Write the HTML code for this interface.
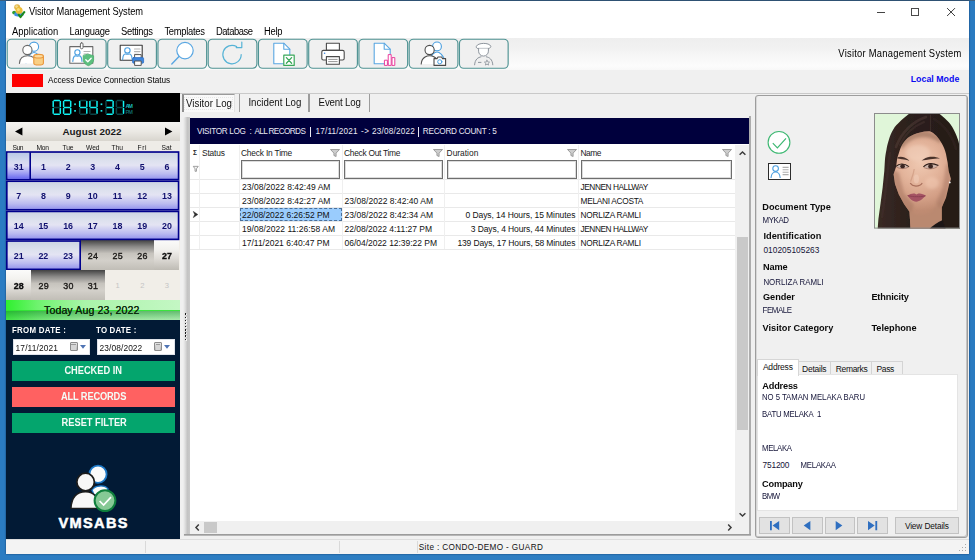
<!DOCTYPE html>
<html>
<head>
<meta charset="utf-8">
<title>Visitor Management System</title>
<style>
*{box-sizing:border-box;margin:0;padding:0}
html,body{width:975px;height:560px;overflow:hidden}
body{position:relative;background:linear-gradient(90deg,#2b7cc2 0%,#2e7ec2 50%,#2a7ac0 100%);font-family:"Liberation Sans",sans-serif;font-size:9px;color:#000}
.abs{position:absolute}
.t{position:absolute;white-space:pre;line-height:1;font-family:"Liberation Sans",sans-serif}
svg{overflow:visible}
</style>
</head>
<body>
<div style="position:absolute;left:0px;top:0px;width:975.00px;height:1.20px;background:#3a5f80;"></div>
<div style="position:absolute;left:6px;top:1px;width:963.00px;height:552.80px;background:#f0f0f0;box-shadow:0 0 1.6px rgba(10,30,70,.75);"></div>
<div style="position:absolute;left:6px;top:1px;width:963.00px;height:37.00px;background:#fff;"></div>
<svg class="abs" style="left:8px;top:2px" width="22" height="18" viewBox="8 2 22 18">
<ellipse cx="14.2" cy="12.6" rx="2" ry="1.9" fill="#2f9e2f"/>
<path d="M14.4 13 C15.6 11.6,22.4 11.6,23.7 13.2 L23.7 15.2 C21 16.8,16.4 16.8,14.4 15.4z" fill="#3d8ee6"/>
<circle cx="17.2" cy="7.2" r="3" fill="#e3b84a"/><circle cx="16.6" cy="6.6" r="1.3" fill="#f4dc90"/>
<circle cx="19.1" cy="10.4" r="3.5" fill="#edbd38"/><circle cx="18.4" cy="9.4" r="1.5" fill="#f9de7c"/>
<path d="M18.2 14.2 L20.5 17.2 L24.8 11.4" fill="none" stroke="#1c8a1c" stroke-width="2" stroke-linejoin="round"/>
</svg>
<div class="t" style="left:29.00px;top:8.33px;font-size:9.3px;letter-spacing:-0.088px;color:#000;transform:scaleY(1.17);transform-origin:0 7.87px;">Visitor Management System</div>
<div style="position:absolute;left:877px;top:12px;width:8.00px;height:1.00px;background:#444;"></div>
<div style="position:absolute;left:911px;top:8px;width:8.00px;height:8.00px;border:1px solid #4a4a4a;"></div>
<svg class="abs" style="left:946px;top:7px" width="11" height="11" viewBox="0 0 11 11"><path d="M1.1 1.1 L9 9 M9 1.1 L1.1 9" stroke="#333" stroke-width=".95" fill="none"/></svg>
<div class="t" style="left:12.00px;top:27.04px;font-size:9.4px;letter-spacing:0.042px;color:#000;transform:scaleY(1.13);transform-origin:0 7.96px;">Application</div>
<div class="t" style="left:69.60px;top:27.04px;font-size:9.4px;letter-spacing:-0.203px;color:#000;transform:scaleY(1.13);transform-origin:0 7.96px;">Language</div>
<div class="t" style="left:121.00px;top:27.04px;font-size:9.4px;letter-spacing:-0.280px;color:#000;transform:scaleY(1.13);transform-origin:0 7.96px;">Settings</div>
<div class="t" style="left:164.40px;top:27.04px;font-size:9.4px;letter-spacing:-0.280px;color:#000;transform:scaleY(1.13);transform-origin:0 7.96px;">Templates</div>
<div class="t" style="left:216.00px;top:27.04px;font-size:9.4px;letter-spacing:-0.462px;color:#000;transform:scaleY(1.13);transform-origin:0 7.96px;">Database</div>
<div class="t" style="left:264.00px;top:27.04px;font-size:9.4px;letter-spacing:-0.244px;color:#000;transform:scaleY(1.13);transform-origin:0 7.96px;">Help</div>
<div style="position:absolute;left:6px;top:38px;width:963.00px;height:32.00px;background:linear-gradient(#eeeeee 0%,#f1f1f1 30%,#f7f7f7 60%,#fcfcfc 88%,#f8f8f8 100%);"></div>
<svg class="abs" style="left:0;top:0" width="520" height="72" viewBox="0 0 520 72" fill="none" stroke-linecap="round" stroke-linejoin="round">
<rect x="7.20" y="39.2" width="48.7" height="29" rx="4.2" fill="#f0f0f0" stroke="#4f9393" stroke-width="1.15"/><rect x="57.45" y="39.2" width="48.7" height="29" rx="4.2" fill="#f0f0f0" stroke="#4f9393" stroke-width="1.15"/><rect x="107.70" y="39.2" width="48.7" height="29" rx="4.2" fill="#f0f0f0" stroke="#4f9393" stroke-width="1.15"/><rect x="157.95" y="39.2" width="48.7" height="29" rx="4.2" fill="#f0f0f0" stroke="#4f9393" stroke-width="1.15"/><rect x="208.20" y="39.2" width="48.7" height="29" rx="4.2" fill="#f0f0f0" stroke="#4f9393" stroke-width="1.15"/><rect x="258.45" y="39.2" width="48.7" height="29" rx="4.2" fill="#f0f0f0" stroke="#4f9393" stroke-width="1.15"/><rect x="308.70" y="39.2" width="48.7" height="29" rx="4.2" fill="#f0f0f0" stroke="#4f9393" stroke-width="1.15"/><rect x="358.95" y="39.2" width="48.7" height="29" rx="4.2" fill="#f0f0f0" stroke="#4f9393" stroke-width="1.15"/><rect x="409.20" y="39.2" width="48.7" height="29" rx="4.2" fill="#f0f0f0" stroke="#4f9393" stroke-width="1.15"/><rect x="459.45" y="39.2" width="48.7" height="29" rx="4.2" fill="#f0f0f0" stroke="#4f9393" stroke-width="1.15"/><path d="M26 63 C26.5 55.5,32.5 52.50000000000001,34.0 52.50000000000001 C35.5 52.50000000000001,41.5 55.5,42 63" fill="#fff" stroke="#4a9fe0" stroke-width="1.1"/><circle cx="34" cy="46.7" r="4.6" fill="#fff" stroke="#4a9fe0" stroke-width="1.1"/><path d="M19.4 63.4 C19.9 55.9,26.2 55.800000000000004,27.7 55.800000000000004 C29.2 55.800000000000004,35.5 55.9,36 63.4" fill="#fff" stroke="#6a6a6a" stroke-width="1.1"/><circle cx="27.4" cy="50" r="4.6" fill="#fff" stroke="#6a6a6a" stroke-width="1.1"/><path d="M33.8 56.2 v7 a4.8 1.8 0 0 0 9.6 0 v-7" fill="#f9cf84" stroke="#e9963a" stroke-width="1.1"/><ellipse cx="38.6" cy="56.2" rx="4.8" ry="1.8" fill="#fbdca0" stroke="#e9963a" stroke-width="1.1"/><rect x="69.8" y="46.6" width="23" height="16.6" fill="#fff" stroke="#6a6a6a" stroke-width="1.1"/><rect x="80.4" y="42.8" width="2.6" height="6" rx="1.2" fill="#fff" stroke="#6a6a6a" stroke-width="1"/><path d="M72.8 61.4 C73.3 53.9,75.9 56.2,77.4 56.2 C78.9 56.2,81.5 53.9,82 61.4" fill="none" stroke="#4a9fe0" stroke-width="1.1"/><circle cx="77.4" cy="52.4" r="2.6" fill="none" stroke="#4a9fe0" stroke-width="1.1"/><path d="M84 51.5h6M84 54h4" stroke="#b5b5b5" stroke-width="1.2"/><path d="M88.4 54.2 l5.2 1.6 v4 c0 3 -2.4 4.8 -5.2 5.9 c-2.8 -1.1 -5.2 -2.9 -5.2 -5.9 v-4z" fill="#5cbf7f" stroke="#4aae6c" stroke-width="0.8"/><path d="M85.8 59.8 l2 2 l3.4 -3.6" stroke="#fff" stroke-width="1.3"/><rect x="120.2" y="45.2" width="22" height="15" fill="#fff" stroke="#3a3a3a" stroke-width="1.1"/><path d="M122.6 59.6 C123.1 52.1,125.89999999999999 54.300000000000004,127.39999999999999 54.300000000000004 C128.89999999999998 54.300000000000004,131.7 52.1,132.2 59.6" fill="none" stroke="#4a9fe0" stroke-width="1.1"/><circle cx="127.4" cy="50.4" r="2.7" fill="none" stroke="#4a9fe0" stroke-width="1.1"/><path d="M134.5 49h5.5M134.5 51.6h5.5M134.5 54.2h4" stroke="#b5b5b5" stroke-width="1.1"/><rect x="135" y="54.6" width="6.2" height="4" fill="#fff" stroke="#555" stroke-width="1"/><rect x="132.6" y="57.6" width="11" height="5.6" rx="1" fill="#3f86dd" stroke="#2f6fc4" stroke-width="0.8"/><rect x="135" y="61" width="6.2" height="4.4" fill="#fff" stroke="#555" stroke-width="1"/><circle cx="185" cy="50.6" r="8.2" fill="#fff" stroke="#5aa7e2" stroke-width="1.2"/><path d="M179 56.6 L171.8 64" stroke="#5aa7e2" stroke-width="1.4"/><path d="M241.2 54.6 a9.2 9.2 0 1 1 -4.6 -8" stroke="#56b3d6" stroke-width="1.2"/><path d="M236.2 47.6 h5.6 v-5.6" stroke="#56b3d6" stroke-width="1.2"/><path d="M273.8 43.2 h10 l6 6 v14.6 h-16z" fill="#fff" stroke="#5aa7e2" stroke-width="1.1"/><path d="M283.8 43.2 v6 h6" stroke="#5aa7e2" stroke-width="1.1"/><rect x="283.8" y="55.2" width="10.4" height="10.2" fill="#fff" stroke="#3aa85a" stroke-width="1.2"/><path d="M286.4 57.6 l5.2 5.6 M291.6 57.6 l-5.2 5.6" stroke="#3aa85a" stroke-width="1.3"/><rect x="326.4" y="43.2" width="13" height="7.2" fill="#fff" stroke="#4a4a4a" stroke-width="1.1"/><rect x="321.8" y="50.4" width="22.4" height="9.6" rx="1.6" fill="#fff" stroke="#4a4a4a" stroke-width="1.1"/><rect x="326.4" y="56.6" width="13" height="7.6" fill="#fff" stroke="#4a4a4a" stroke-width="1.1"/><path d="M328.6 59.4h8.6M328.6 61.6h8.6" stroke="#8a8a8a" stroke-width="0.9"/><circle cx="324.6" cy="53.2" r="0.8" fill="#3f86dd"/><path d="M374.2 43.2 h10 l6 6 v14.6 h-16z" fill="#fff" stroke="#5aa7e2" stroke-width="1.1"/><path d="M384.2 43.2 v6 h6" stroke="#5aa7e2" stroke-width="1.1"/><rect x="384.8" y="60.2" width="2.6" height="5.2" fill="#fff" stroke="#ea3f9d" stroke-width="1"/><rect x="388.6" y="54.6" width="2.6" height="10.8" fill="#fff" stroke="#ea3f9d" stroke-width="1"/><rect x="392.4" y="57.6" width="2.4" height="7.8" fill="#fff" stroke="#ea3f9d" stroke-width="1"/><path d="M429.4 62 C429.9 54.5,435.5 52.0,437.0 52.0 C438.5 52.0,444.1 54.5,444.6 62" fill="#fff" stroke="#4a9fe0" stroke-width="1.1"/><circle cx="437" cy="46.4" r="4.4" fill="#fff" stroke="#4a9fe0" stroke-width="1.1"/><path d="M421.2 64 C421.7 56.5,428.2 55.800000000000004,429.7 55.800000000000004 C431.2 55.800000000000004,437.7 56.5,438.2 64" fill="#fff" stroke="#4d4d4d" stroke-width="1.1"/><circle cx="429.6" cy="50" r="4.6" fill="#fff" stroke="#4d4d4d" stroke-width="1.1"/><path d="M434 58.6 h3 l1 -1.6 h3.6 l1 1.6 h3 v6.8 h-11.6z" fill="#fff" stroke="#4a4a4a" stroke-width="1.1"/><circle cx="439.8" cy="61.8" r="2.1" stroke="#4a9fe0" stroke-width="1"/><path d="M476.2 46.8 c0 -4.6 14.6 -4.6 14.6 0 l-1.4 1.6 h-11.8z" fill="#fff" stroke="#8d949c" stroke-width="1"/><path d="M478.6 48.6 v2.6 a4.9 4.9 0 0 0 9.8 0 v-2.6" fill="#fff" stroke="#8d949c" stroke-width="1"/><path d="M474.6 64.8 c0.4 -5.6 3.4 -7.4 6.4 -8 M492.8 64.8 c-0.4 -5.6 -3.4 -7.4 -6.4 -8" stroke="#8d949c" stroke-width="1"/><path d="M478.4 62.4h2.6" stroke="#8d949c" stroke-width="1"/><path d="M487 60.2 l0.8 1.7 l1.8 .2 l-1.4 1.2 l.4 1.8 l-1.6 -.9 l-1.6 .9 l.4 -1.8 l-1.4 -1.2 l1.8 -.2z" stroke="#8d949c" stroke-width="0.8"/></svg>
<div class="t" style="left:838.30px;top:48.74px;font-size:9.4px;letter-spacing:0.251px;color:#000;transform:scaleY(1.1);transform-origin:0 7.96px;">Visitor Management System</div>
<div style="position:absolute;left:12.4px;top:74px;width:30.40px;height:13.20px;background:#fe0000;"></div>
<div class="t" style="left:48.00px;top:76.66px;font-size:8.2px;letter-spacing:-0.022px;color:#000;transform:scaleY(1.09);transform-origin:0 6.94px;">Access Device Connection Status</div>
<div class="t" style="left:910.70px;top:75.15px;font-size:8.8px;letter-spacing:0.022px;color:#0a0af0;font-weight:bold;">Local Mode</div>
<div style="position:absolute;left:6px;top:93.4px;width:174.00px;height:446.00px;background:#021a35;"></div>
<div style="position:absolute;left:6px;top:93.4px;width:174.00px;height:28.60px;background:#000;"></div>
<svg class="abs" style="left:0;top:90px" width="190" height="35" viewBox="0 90 190 35" fill="none"><path d="M54.20 100.50 L59.30 100.50" stroke="#10f2f2" stroke-width="1.5" stroke-linecap="round"/><path d="M60.30 101.50 L60.30 106.40" stroke="#10f2f2" stroke-width="1.5" stroke-linecap="round"/><path d="M60.30 108.40 L60.30 113.30" stroke="#10f2f2" stroke-width="1.5" stroke-linecap="round"/><path d="M54.20 114.30 L59.30 114.30" stroke="#10f2f2" stroke-width="1.5" stroke-linecap="round"/><path d="M53.20 108.40 L53.20 113.30" stroke="#10f2f2" stroke-width="1.5" stroke-linecap="round"/><path d="M53.20 101.50 L53.20 106.40" stroke="#10f2f2" stroke-width="1.5" stroke-linecap="round"/><path d="M54.20 107.40 L59.30 107.40" stroke="#0a4446" stroke-width="1.5" stroke-linecap="round"/><path d="M64.60 100.50 L69.70 100.50" stroke="#10f2f2" stroke-width="1.5" stroke-linecap="round"/><path d="M70.70 101.50 L70.70 106.40" stroke="#10f2f2" stroke-width="1.5" stroke-linecap="round"/><path d="M70.70 108.40 L70.70 113.30" stroke="#10f2f2" stroke-width="1.5" stroke-linecap="round"/><path d="M64.60 114.30 L69.70 114.30" stroke="#10f2f2" stroke-width="1.5" stroke-linecap="round"/><path d="M63.60 108.40 L63.60 113.30" stroke="#10f2f2" stroke-width="1.5" stroke-linecap="round"/><path d="M63.60 101.50 L63.60 106.40" stroke="#10f2f2" stroke-width="1.5" stroke-linecap="round"/><path d="M64.60 107.40 L69.70 107.40" stroke="#10f2f2" stroke-width="1.5" stroke-linecap="round"/><path d="M80.70 100.50 L85.80 100.50" stroke="#0a4446" stroke-width="1.5" stroke-linecap="round"/><path d="M86.80 101.50 L86.80 106.40" stroke="#10f2f2" stroke-width="1.5" stroke-linecap="round"/><path d="M86.80 108.40 L86.80 113.30" stroke="#10f2f2" stroke-width="1.5" stroke-linecap="round"/><path d="M80.70 114.30 L85.80 114.30" stroke="#0a4446" stroke-width="1.5" stroke-linecap="round"/><path d="M79.70 108.40 L79.70 113.30" stroke="#0a4446" stroke-width="1.5" stroke-linecap="round"/><path d="M79.70 101.50 L79.70 106.40" stroke="#10f2f2" stroke-width="1.5" stroke-linecap="round"/><path d="M80.70 107.40 L85.80 107.40" stroke="#10f2f2" stroke-width="1.5" stroke-linecap="round"/><path d="M90.90 100.50 L96.00 100.50" stroke="#0a4446" stroke-width="1.5" stroke-linecap="round"/><path d="M97.00 101.50 L97.00 106.40" stroke="#10f2f2" stroke-width="1.5" stroke-linecap="round"/><path d="M97.00 108.40 L97.00 113.30" stroke="#10f2f2" stroke-width="1.5" stroke-linecap="round"/><path d="M90.90 114.30 L96.00 114.30" stroke="#0a4446" stroke-width="1.5" stroke-linecap="round"/><path d="M89.90 108.40 L89.90 113.30" stroke="#0a4446" stroke-width="1.5" stroke-linecap="round"/><path d="M89.90 101.50 L89.90 106.40" stroke="#10f2f2" stroke-width="1.5" stroke-linecap="round"/><path d="M90.90 107.40 L96.00 107.40" stroke="#10f2f2" stroke-width="1.5" stroke-linecap="round"/><path d="M107.00 100.50 L112.10 100.50" stroke="#10f2f2" stroke-width="1.5" stroke-linecap="round"/><path d="M113.10 101.50 L113.10 106.40" stroke="#10f2f2" stroke-width="1.5" stroke-linecap="round"/><path d="M113.10 108.40 L113.10 113.30" stroke="#10f2f2" stroke-width="1.5" stroke-linecap="round"/><path d="M107.00 114.30 L112.10 114.30" stroke="#10f2f2" stroke-width="1.5" stroke-linecap="round"/><path d="M106.00 108.40 L106.00 113.30" stroke="#0a4446" stroke-width="1.5" stroke-linecap="round"/><path d="M106.00 101.50 L106.00 106.40" stroke="#0a4446" stroke-width="1.5" stroke-linecap="round"/><path d="M107.00 107.40 L112.10 107.40" stroke="#10f2f2" stroke-width="1.5" stroke-linecap="round"/><path d="M117.40 100.50 L122.50 100.50" stroke="#0a4446" stroke-width="1.5" stroke-linecap="round"/><path d="M123.50 101.50 L123.50 106.40" stroke="#10f2f2" stroke-width="1.5" stroke-linecap="round"/><path d="M123.50 108.40 L123.50 113.30" stroke="#10f2f2" stroke-width="1.5" stroke-linecap="round"/><path d="M117.40 114.30 L122.50 114.30" stroke="#0a4446" stroke-width="1.5" stroke-linecap="round"/><path d="M116.40 108.40 L116.40 113.30" stroke="#0a4446" stroke-width="1.5" stroke-linecap="round"/><path d="M116.40 101.50 L116.40 106.40" stroke="#0a4446" stroke-width="1.5" stroke-linecap="round"/><path d="M117.40 107.40 L122.50 107.40" stroke="#0a4446" stroke-width="1.5" stroke-linecap="round"/><rect x="74.2" y="103.4" width="1.7" height="1.7" fill="#1fe6e6"/><rect x="74.2" y="110" width="1.7" height="1.7" fill="#1fe6e6"/><rect x="100.60000000000001" y="103.4" width="1.7" height="1.7" fill="#1fe6e6"/><rect x="100.60000000000001" y="110" width="1.7" height="1.7" fill="#1fe6e6"/></svg>
<div class="t" style="left:125.40px;top:103.76px;font-size:5.6px;letter-spacing:-1.109px;color:#19b8b8;font-weight:bold;">AM</div>
<div class="t" style="left:125.40px;top:109.86px;font-size:5.6px;letter-spacing:-0.800px;color:#0f6466;font-weight:bold;">PM</div>
<div style="position:absolute;left:6px;top:122px;width:174.00px;height:18.60px;background:linear-gradient(#f5f4f1 0%,#ebe9e4 50%,#d8d5ce 100%);"></div>
<svg class="abs" style="left:0;top:120px" width="185" height="24" viewBox="0 120 185 24"><path d="M15 131.6 L22.4 127.6 V135.6z M172.4 131.6 L165 127.6 V135.6z" fill="#000"/></svg>
<div class="t" style="left:62.40px;top:127.22px;font-size:9.9px;letter-spacing:0.034px;color:#1a1a1a;font-weight:bold;">August 2022</div>
<div style="position:absolute;left:6px;top:140.6px;width:174.00px;height:11.40px;background:#eeece7;"></div>
<div class="t" style="left:12.40px;top:144.53px;font-size:6.7px;letter-spacing:-0.360px;color:#111;transform:scaleY(1.08);transform-origin:0 5.67px;">Sun</div>
<div class="t" style="left:36.40px;top:144.53px;font-size:6.7px;letter-spacing:-0.216px;color:#111;transform:scaleY(1.08);transform-origin:0 5.67px;">Mon</div>
<div class="t" style="left:62.40px;top:144.53px;font-size:6.7px;letter-spacing:-0.048px;color:#111;transform:scaleY(1.08);transform-origin:0 5.67px;">Tue</div>
<div class="t" style="left:86.00px;top:144.53px;font-size:6.7px;letter-spacing:-0.027px;color:#111;transform:scaleY(1.08);transform-origin:0 5.67px;">Wed</div>
<div class="t" style="left:111.60px;top:144.53px;font-size:6.7px;letter-spacing:-0.072px;color:#111;transform:scaleY(1.08);transform-origin:0 5.67px;">Thu</div>
<div class="t" style="left:137.60px;top:144.53px;font-size:6.7px;letter-spacing:0.494px;color:#111;transform:scaleY(1.08);transform-origin:0 5.67px;">Fri</div>
<div class="t" style="left:161.60px;top:144.53px;font-size:6.7px;letter-spacing:-0.028px;color:#111;transform:scaleY(1.08);transform-origin:0 5.67px;">Sat</div>
<div style="position:absolute;left:6px;top:151.2px;width:174.00px;height:148.80px;background:#f1eee8;"></div>
<div style="position:absolute;left:80.2px;top:240.2px;width:74.10px;height:30.00px;background:linear-gradient(#424242 0%,#8a8987 22%,#c6c3bd 45%,#d3d0ca 68%,#c1beb7 100%);"></div>
<div style="position:absolute;left:154.3px;top:240.2px;width:24.70px;height:30.00px;background:linear-gradient(#fbfbfa 0%,#f3f2ef 30%,#dedbd6 62%,#bebbb4 100%);"></div>
<svg class="abs" style="left:0;top:148px" width="185" height="126" viewBox="0 148 185 126"><defs><linearGradient id="gs" x1="0" y1="0" x2="0" y2="1"><stop offset="0%" stop-color="#cbd4e2"/><stop offset="32%" stop-color="#dde1ee"/><stop offset="48%" stop-color="#e4e4f3"/><stop offset="78%" stop-color="#bcbcf0"/><stop offset="100%" stop-color="#9292ec"/></linearGradient><linearGradient id="gs31" x1="0" y1="0" x2="0" y2="1"><stop offset="0%" stop-color="#b9c9e6"/><stop offset="35%" stop-color="#d6dbf0"/><stop offset="50%" stop-color="#dcdcf6"/><stop offset="78%" stop-color="#a0a0f3"/><stop offset="100%" stop-color="#6a6aef"/></linearGradient></defs><rect x="6.83" y="152.02" width="171.74" height="27.55" fill="url(#gs)" stroke="#00008c" stroke-width="1.65"/><rect x="7.65" y="152.85" width="22" height="25.90" fill="url(#gs31)"/><rect x="29.4" y="152.20" width="1.6" height="27.20" fill="#00008c"/><rect x="6.83" y="181.22" width="171.74" height="28.55" fill="url(#gs)" stroke="#00008c" stroke-width="1.65"/><rect x="6.83" y="211.42" width="171.74" height="27.95" fill="url(#gs)" stroke="#00008c" stroke-width="1.65"/><rect x="6.83" y="241.02" width="73.35" height="28.35" fill="url(#gs)" stroke="#00008c" stroke-width="1.65"/></svg>
<div style="position:absolute;left:6.0px;top:270.2px;width:24.70px;height:29.60px;background:linear-gradient(#fbfbfa 0%,#f3f2ef 30%,#dedbd6 62%,#bebbb4 100%);"></div>
<div style="position:absolute;left:30.7px;top:270.2px;width:74.20px;height:29.60px;background:linear-gradient(#424242 0%,#8a8987 22%,#c6c3bd 45%,#d3d0ca 68%,#c1beb7 100%);"></div>
<div class="t" style="left:13.71px;top:162.57px;font-size:8.9px;color:#10106e;font-weight:bold;transform:scaleY(1.12);transform-origin:0 7.53px;">31</div>
<div class="t" style="left:40.91px;top:162.57px;font-size:8.9px;color:#10106e;font-weight:bold;transform:scaleY(1.12);transform-origin:0 7.53px;">1</div>
<div class="t" style="left:65.63px;top:162.57px;font-size:8.9px;color:#10106e;font-weight:bold;transform:scaleY(1.12);transform-origin:0 7.53px;">2</div>
<div class="t" style="left:90.35px;top:162.57px;font-size:8.9px;color:#10106e;font-weight:bold;transform:scaleY(1.12);transform-origin:0 7.53px;">3</div>
<div class="t" style="left:115.07px;top:162.57px;font-size:8.9px;color:#10106e;font-weight:bold;transform:scaleY(1.12);transform-origin:0 7.53px;">4</div>
<div class="t" style="left:139.79px;top:162.57px;font-size:8.9px;color:#10106e;font-weight:bold;transform:scaleY(1.12);transform-origin:0 7.53px;">5</div>
<div class="t" style="left:164.51px;top:162.57px;font-size:8.9px;color:#10106e;font-weight:bold;transform:scaleY(1.12);transform-origin:0 7.53px;">6</div>
<div class="t" style="left:16.19px;top:191.77px;font-size:8.9px;color:#10106e;font-weight:bold;transform:scaleY(1.12);transform-origin:0 7.53px;">7</div>
<div class="t" style="left:40.91px;top:191.77px;font-size:8.9px;color:#10106e;font-weight:bold;transform:scaleY(1.12);transform-origin:0 7.53px;">8</div>
<div class="t" style="left:65.63px;top:191.77px;font-size:8.9px;color:#10106e;font-weight:bold;transform:scaleY(1.12);transform-origin:0 7.53px;">9</div>
<div class="t" style="left:87.87px;top:191.77px;font-size:8.9px;color:#10106e;font-weight:bold;transform:scaleY(1.12);transform-origin:0 7.53px;">10</div>
<div class="t" style="left:112.84px;top:191.77px;font-size:8.9px;color:#10106e;font-weight:bold;transform:scaleY(1.12);transform-origin:0 7.53px;">11</div>
<div class="t" style="left:137.31px;top:191.77px;font-size:8.9px;color:#10106e;font-weight:bold;transform:scaleY(1.12);transform-origin:0 7.53px;">12</div>
<div class="t" style="left:162.03px;top:191.77px;font-size:8.9px;color:#10106e;font-weight:bold;transform:scaleY(1.12);transform-origin:0 7.53px;">13</div>
<div class="t" style="left:13.71px;top:221.97px;font-size:8.9px;color:#10106e;font-weight:bold;transform:scaleY(1.12);transform-origin:0 7.53px;">14</div>
<div class="t" style="left:38.43px;top:221.97px;font-size:8.9px;color:#10106e;font-weight:bold;transform:scaleY(1.12);transform-origin:0 7.53px;">15</div>
<div class="t" style="left:63.15px;top:221.97px;font-size:8.9px;color:#10106e;font-weight:bold;transform:scaleY(1.12);transform-origin:0 7.53px;">16</div>
<div class="t" style="left:87.87px;top:221.97px;font-size:8.9px;color:#10106e;font-weight:bold;transform:scaleY(1.12);transform-origin:0 7.53px;">17</div>
<div class="t" style="left:112.59px;top:221.97px;font-size:8.9px;color:#10106e;font-weight:bold;transform:scaleY(1.12);transform-origin:0 7.53px;">18</div>
<div class="t" style="left:137.31px;top:221.97px;font-size:8.9px;color:#10106e;font-weight:bold;transform:scaleY(1.12);transform-origin:0 7.53px;">19</div>
<div class="t" style="left:162.03px;top:221.97px;font-size:8.9px;color:#10106e;font-weight:bold;transform:scaleY(1.12);transform-origin:0 7.53px;">20</div>
<div class="t" style="left:13.71px;top:251.57px;font-size:8.9px;color:#10106e;font-weight:bold;transform:scaleY(1.12);transform-origin:0 7.53px;">21</div>
<div class="t" style="left:38.43px;top:251.57px;font-size:8.9px;color:#10106e;font-weight:bold;transform:scaleY(1.12);transform-origin:0 7.53px;">22</div>
<div class="t" style="left:63.15px;top:251.57px;font-size:8.9px;color:#10106e;font-weight:bold;transform:scaleY(1.12);transform-origin:0 7.53px;">23</div>
<div class="t" style="left:87.87px;top:251.57px;font-size:8.9px;color:#0c0c0c;font-weight:normal;transform:scaleY(1.12);transform-origin:0 7.53px;-webkit-text-stroke:.35px #1c1a18;color:#1c1a18;letter-spacing:.3px;">24</div>
<div class="t" style="left:112.59px;top:251.57px;font-size:8.9px;color:#0c0c0c;font-weight:normal;transform:scaleY(1.12);transform-origin:0 7.53px;-webkit-text-stroke:.35px #1c1a18;color:#1c1a18;letter-spacing:.3px;">25</div>
<div class="t" style="left:137.31px;top:251.57px;font-size:8.9px;color:#0c0c0c;font-weight:normal;transform:scaleY(1.12);transform-origin:0 7.53px;-webkit-text-stroke:.35px #1c1a18;color:#1c1a18;letter-spacing:.3px;">26</div>
<div class="t" style="left:162.03px;top:251.57px;font-size:8.9px;color:#0c0c0c;font-weight:bold;transform:scaleY(1.12);transform-origin:0 7.53px;-webkit-text-stroke:.3px #0c0c0c;">27</div>
<div class="t" style="left:13.71px;top:281.57px;font-size:8.9px;color:#0c0c0c;font-weight:bold;transform:scaleY(1.12);transform-origin:0 7.53px;-webkit-text-stroke:.3px #0c0c0c;">28</div>
<div class="t" style="left:38.43px;top:281.57px;font-size:8.9px;color:#0c0c0c;font-weight:normal;transform:scaleY(1.12);transform-origin:0 7.53px;-webkit-text-stroke:.35px #1c1a18;color:#1c1a18;letter-spacing:.3px;">29</div>
<div class="t" style="left:63.15px;top:281.57px;font-size:8.9px;color:#0c0c0c;font-weight:normal;transform:scaleY(1.12);transform-origin:0 7.53px;-webkit-text-stroke:.35px #1c1a18;color:#1c1a18;letter-spacing:.3px;">30</div>
<div class="t" style="left:87.87px;top:281.57px;font-size:8.9px;color:#0c0c0c;font-weight:normal;transform:scaleY(1.12);transform-origin:0 7.53px;-webkit-text-stroke:.35px #1c1a18;color:#1c1a18;letter-spacing:.3px;">31</div>
<div class="t" style="left:115.43px;top:282.27px;font-size:7.6px;color:#c4c4c4;">1</div>
<div class="t" style="left:140.15px;top:282.27px;font-size:7.6px;color:#c4c4c4;">2</div>
<div class="t" style="left:164.87px;top:282.27px;font-size:7.6px;color:#c4c4c4;">3</div>
<div style="position:absolute;left:6px;top:300px;width:174.00px;height:20.00px;background:linear-gradient(90deg,#2ff02f 0%,#6ef36e 18%,#a9f4a9 45%,#c4f7c4 100%);"></div>
<div style="position:absolute;left:6px;top:310px;width:174.00px;height:10.00px;background:linear-gradient(180deg,rgba(30,140,50,.62) 0%,rgba(50,160,70,.48) 45%,rgba(110,200,120,.30) 100%);"></div>
<div style="position:absolute;left:6px;top:309.6px;width:174.00px;height:1.00px;background:rgba(50,240,50,.8);"></div>
<div class="t" style="left:44.00px;top:305.43px;font-size:10.6px;letter-spacing:0.100px;color:#0a2a0a;text-shadow:0 0 .4px #0a2a0a;">Today Aug 23, 2022</div>
<div class="t" style="left:12.00px;top:326.51px;font-size:7.9px;letter-spacing:0.281px;color:#fff;font-weight:bold;transform:scaleY(1.2);transform-origin:0 6.69px;">FROM DATE :</div>
<div class="t" style="left:96.00px;top:326.51px;font-size:7.9px;letter-spacing:0.204px;color:#fff;font-weight:bold;transform:scaleY(1.2);transform-origin:0 6.69px;">TO DATE :</div>
<div style="position:absolute;left:13px;top:339.4px;width:77.40px;height:15.40px;background:#fff;border:1px solid #dfe3ea;"></div>
<div class="t" style="left:15.60px;top:343.69px;font-size:8.4px;letter-spacing:0.110px;color:#111;transform:scaleY(1.1);transform-origin:0 7.11px;">17/11/2021</div>
<div style="position:absolute;left:69.6px;top:342px;width:8.00px;height:9.40px;background:linear-gradient(#e4e4e4,#b8b8b8);border:1px solid #8c8c8c;border-radius:1px;"></div>
<div style="position:absolute;left:71.19999999999999px;top:343.6px;width:4.80px;height:6.00px;background:#d6d6d6;border-top:1px solid #9a9a9a;"></div>
<svg class="abs" style="left:79.8px;top:345px" width="6" height="4" viewBox="0 0 6 4"><path d="M0 0h6L3 3.8z" fill="#4f74b4"/></svg>
<div style="position:absolute;left:97.4px;top:339.4px;width:77.20px;height:15.40px;background:#fff;border:1px solid #dfe3ea;"></div>
<div class="t" style="left:99.60px;top:343.69px;font-size:8.4px;letter-spacing:0.085px;color:#111;transform:scaleY(1.1);transform-origin:0 7.11px;">23/08/2022</div>
<div style="position:absolute;left:154.0px;top:342px;width:8.00px;height:9.40px;background:linear-gradient(#e4e4e4,#b8b8b8);border:1px solid #8c8c8c;border-radius:1px;"></div>
<div style="position:absolute;left:155.6px;top:343.6px;width:4.80px;height:6.00px;background:#d6d6d6;border-top:1px solid #9a9a9a;"></div>
<svg class="abs" style="left:164.2px;top:345px" width="6" height="4" viewBox="0 0 6 4"><path d="M0 0h6L3 3.8z" fill="#4f74b4"/></svg>
<div style="position:absolute;left:12.4px;top:361px;width:162.80px;height:20.00px;background:#04a56d;"></div>
<div class="t" style="left:64.40px;top:367.43px;font-size:9.3px;letter-spacing:-0.030px;color:#f4fbf7;font-weight:bold;transform:scaleY(1.1);transform-origin:0 7.87px;">CHECKED IN</div>
<div style="position:absolute;left:12.4px;top:387px;width:162.80px;height:20.00px;background:#ff6161;"></div>
<div class="t" style="left:61.00px;top:393.43px;font-size:9.3px;letter-spacing:-0.160px;color:#f4fbf7;font-weight:bold;transform:scaleY(1.1);transform-origin:0 7.87px;">ALL RECORDS</div>
<div style="position:absolute;left:12.4px;top:413px;width:162.80px;height:20.00px;background:#04a56d;"></div>
<div class="t" style="left:61.60px;top:419.43px;font-size:9.3px;letter-spacing:-0.022px;color:#f4fbf7;font-weight:bold;transform:scaleY(1.1);transform-origin:0 7.87px;">RESET FILTER</div>
<svg class="abs" style="left:60px;top:455px" width="70" height="60" viewBox="60 455 70 60"><circle cx="98" cy="474.2" r="8.6" fill="#fbfbfb" stroke="#1d78c6" stroke-width="1.8"/><path d="M92 490 c3 -5 13 -5.5 16 -1 l-4 6 h-10z" fill="#fbfbfb" stroke="#1d78c6" stroke-width="1.4"/><path d="M71 508.4 c0.6 -11.5 6 -16.6 14.6 -16.6 c8.6 0 13 5.1 13.4 16.6z" fill="#f7f7f7" stroke="#1c1c1c" stroke-width="1.4"/><circle cx="85.6" cy="482" r="8.8" fill="#f7f7f7" stroke="#1c1c1c" stroke-width="1.8"/><circle cx="105" cy="500.6" r="10.4" fill="#86c995" stroke="#0f7f3c" stroke-width="2"/><path d="M99.6 501 l4 4 l7.4 -7.8" fill="none" stroke="#fff" stroke-width="1.7"/></svg>
<div class="t" style="left:58.40px;top:516.24px;font-size:14.6px;letter-spacing:1.347px;color:#fff;font-weight:bold;-webkit-text-stroke:.5px #fff;">VMSABS</div>
<div style="position:absolute;left:180px;top:93px;width:789.00px;height:1.00px;background:#c9c9c9;"></div>
<div style="position:absolute;left:180px;top:94px;width:4.00px;height:445.40px;background:#f0f0f0;"></div>
<div style="position:absolute;left:183px;top:116.5px;width:7.20px;height:419.50px;background:linear-gradient(90deg,#f0f0f0 0%,#dedede 30%,#c3c3c3 62%,#c9c9c9 100%);border-top-left-radius:3px;"></div>
<div style="position:absolute;left:185.6px;top:314.0px;width:1.40px;height:1.40px;background:#f8f8f8;"></div>
<div style="position:absolute;left:185px;top:313.4px;width:1.40px;height:1.40px;background:#1a1a1a;"></div>
<div style="position:absolute;left:185.6px;top:317.15px;width:1.40px;height:1.40px;background:#f8f8f8;"></div>
<div style="position:absolute;left:185px;top:316.54999999999995px;width:1.40px;height:1.40px;background:#1a1a1a;"></div>
<div style="position:absolute;left:185.6px;top:320.3px;width:1.40px;height:1.40px;background:#f8f8f8;"></div>
<div style="position:absolute;left:185px;top:319.7px;width:1.40px;height:1.40px;background:#1a1a1a;"></div>
<div style="position:absolute;left:185.6px;top:323.45px;width:1.40px;height:1.40px;background:#f8f8f8;"></div>
<div style="position:absolute;left:185px;top:322.84999999999997px;width:1.40px;height:1.40px;background:#1a1a1a;"></div>
<div style="position:absolute;left:185.6px;top:326.6px;width:1.40px;height:1.40px;background:#f8f8f8;"></div>
<div style="position:absolute;left:185px;top:326.0px;width:1.40px;height:1.40px;background:#1a1a1a;"></div>
<div style="position:absolute;left:185.6px;top:329.75px;width:1.40px;height:1.40px;background:#f8f8f8;"></div>
<div style="position:absolute;left:185px;top:329.15px;width:1.40px;height:1.40px;background:#1a1a1a;"></div>
<div style="position:absolute;left:185.6px;top:332.9px;width:1.40px;height:1.40px;background:#f8f8f8;"></div>
<div style="position:absolute;left:185px;top:332.29999999999995px;width:1.40px;height:1.40px;background:#1a1a1a;"></div>
<div style="position:absolute;left:185.6px;top:336.05px;width:1.40px;height:1.40px;background:#f8f8f8;"></div>
<div style="position:absolute;left:185px;top:335.45px;width:1.40px;height:1.40px;background:#1a1a1a;"></div>
<div style="position:absolute;left:185.6px;top:339.2px;width:1.40px;height:1.40px;background:#f8f8f8;"></div>
<div style="position:absolute;left:185px;top:338.59999999999997px;width:1.40px;height:1.40px;background:#1a1a1a;"></div>
<div style="position:absolute;left:190.2px;top:117.6px;width:559.00px;height:416.80px;background:#fff;"></div>
<div style="position:absolute;left:749.2px;top:116px;width:1.40px;height:420.00px;background:#adadad;"></div>
<div style="position:absolute;left:184px;top:534.4px;width:566.60px;height:1.60px;background:linear-gradient(#8e8e8e,#c4c4c4);"></div>
<div style="position:absolute;left:181.6px;top:94px;width:53.80px;height:17.60px;background:#f9f9f9;border:1px solid #c4c4c4;border-bottom:none;border-top:1.5px solid #9a9a9a;border-left:2px solid #8e8e8e;border-right:1px solid #e2e2e2;"></div>
<div style="position:absolute;left:184px;top:97px;width:49.00px;height:13.40px;border:1px dotted #e6e6e6;"></div>
<div class="t" style="left:186.00px;top:98.59px;font-size:9.7px;letter-spacing:0.035px;color:#111;transform:scaleY(1.06);transform-origin:0 8.21px;">Visitor Log</div>
<div style="position:absolute;left:238.6px;top:94px;width:69.80px;height:17.60px;background:#f1f1f1;border-left:1.3px solid #9c9c9c;"></div>
<div style="position:absolute;left:308.4px;top:94px;width:1.30px;height:17.60px;background:#9c9c9c;"></div>
<div class="t" style="left:248.40px;top:97.59px;font-size:9.7px;letter-spacing:0.014px;color:#111;transform:scaleY(1.06);transform-origin:0 8.21px;">Incident Log</div>
<div style="position:absolute;left:309.6px;top:94px;width:60.40px;height:17.60px;background:#f1f1f1;border-right:1.3px solid #9c9c9c;"></div>
<div class="t" style="left:318.60px;top:97.59px;font-size:9.7px;letter-spacing:-0.160px;color:#111;transform:scaleY(1.06);transform-origin:0 8.21px;">Event Log</div>
<div style="position:absolute;left:190.2px;top:117.7px;width:558.80px;height:26.10px;background:#00003d;"></div>
<div class="t" style="left:197.00px;top:127.66px;font-size:8.2px;letter-spacing:-0.325px;color:#e9e9f3;">VISITOR LOG</div>
<div class="t" style="left:249.40px;top:127.66px;font-size:8.2px;letter-spacing:-0.678px;color:#e9e9f3;">:</div>
<div class="t" style="left:254.40px;top:127.66px;font-size:8.2px;letter-spacing:-0.597px;color:#e9e9f3;">ALL RECORDS</div>
<div style="position:absolute;left:310.2px;top:127px;width:1.10px;height:10.00px;background:#e9e9f3;"></div>
<div style="position:absolute;left:418.4px;top:127px;width:1.10px;height:10.00px;background:#e9e9f3;"></div>
<div class="t" style="left:315.50px;top:127.66px;font-size:8.2px;letter-spacing:0.197px;color:#e9e9f3;">17/11/2021</div>
<div class="t" style="left:361.00px;top:127.66px;font-size:8.2px;letter-spacing:0.480px;color:#e9e9f3;">-&gt;</div>
<div class="t" style="left:372.00px;top:127.66px;font-size:8.2px;letter-spacing:0.196px;color:#e9e9f3;">23/08/2022</div>
<div class="t" style="left:422.80px;top:127.66px;font-size:8.2px;letter-spacing:-0.267px;color:#e9e9f3;">RECORD COUNT : 5</div>
<div style="position:absolute;left:190.4px;top:179.3px;width:544.60px;height:1.00px;background:#e9e9e9;"></div>
<div style="position:absolute;left:190.4px;top:193.2px;width:544.60px;height:1.00px;background:#e9e9e9;"></div>
<div style="position:absolute;left:190.4px;top:207.0px;width:544.60px;height:1.00px;background:#e9e9e9;"></div>
<div style="position:absolute;left:190.4px;top:220.9px;width:544.60px;height:1.00px;background:#e9e9e9;"></div>
<div style="position:absolute;left:190.4px;top:234.8px;width:544.60px;height:1.00px;background:#e9e9e9;"></div>
<div style="position:absolute;left:190.4px;top:248.7px;width:544.60px;height:1.00px;background:#e9e9e9;"></div>
<div style="position:absolute;left:199.1px;top:145px;width:1.00px;height:104.20px;background:#efefef;"></div>
<div style="position:absolute;left:238.5px;top:145px;width:1.00px;height:104.20px;background:#efefef;"></div>
<div style="position:absolute;left:341.9px;top:145px;width:1.00px;height:104.20px;background:#efefef;"></div>
<div style="position:absolute;left:444.1px;top:145px;width:1.00px;height:104.20px;background:#efefef;"></div>
<div style="position:absolute;left:578.1px;top:145px;width:1.00px;height:104.20px;background:#efefef;"></div>
<div style="position:absolute;left:734.5px;top:145px;width:1.00px;height:104.20px;background:#efefef;"></div>
<div class="t" style="left:202.00px;top:148.69px;font-size:8.4px;letter-spacing:-0.163px;color:#1a1a1a;">Status</div>
<div class="t" style="left:241.00px;top:148.69px;font-size:8.4px;letter-spacing:-0.190px;color:#1a1a1a;">Check In Time</div>
<div class="t" style="left:344.00px;top:148.69px;font-size:8.4px;letter-spacing:-0.278px;color:#1a1a1a;">Check Out Time</div>
<div class="t" style="left:446.60px;top:148.69px;font-size:8.4px;letter-spacing:0.007px;color:#1a1a1a;">Duration</div>
<div class="t" style="left:580.60px;top:148.69px;font-size:8.4px;letter-spacing:-0.535px;color:#1a1a1a;">Name</div>
<svg class="abs" style="left:330px;top:148.6px" width="10" height="8" viewBox="-.5 -.5 10 8"><path d="M0 0h9L5.6 3.6V7L3.4 6V3.6z" fill="#cdcdcd" stroke="#8c8c8c" stroke-width=".8"/></svg>
<svg class="abs" style="left:432.6px;top:148.6px" width="10" height="8" viewBox="-.5 -.5 10 8"><path d="M0 0h9L5.6 3.6V7L3.4 6V3.6z" fill="#cdcdcd" stroke="#8c8c8c" stroke-width=".8"/></svg>
<svg class="abs" style="left:567px;top:148.6px" width="10" height="8" viewBox="-.5 -.5 10 8"><path d="M0 0h9L5.6 3.6V7L3.4 6V3.6z" fill="#cdcdcd" stroke="#8c8c8c" stroke-width=".8"/></svg>
<svg class="abs" style="left:722px;top:148.6px" width="10" height="8" viewBox="-.5 -.5 10 8"><path d="M0 0h9L5.6 3.6V7L3.4 6V3.6z" fill="#cdcdcd" stroke="#8c8c8c" stroke-width=".8"/></svg>
<div class="t" style="left:193.00px;top:150.21px;font-size:6.6px;letter-spacing:0.439px;color:#222;font-weight:bold;">Σ</div>
<svg class="abs" style="left:193px;top:165.6px" width="5.5" height="5.5" viewBox="-.5 -.5 10 8" preserveAspectRatio="none"><path d="M0 0h9L5.8 3.6V7.2H3.2V3.6z" fill="#f6f6f6" stroke="#8a8a8a" stroke-width="1.3"/></svg>
<div style="position:absolute;left:241px;top:160.4px;width:98.60px;height:18.60px;background:#fff;border:1px solid #6e6e6e;box-shadow:inset 0 0 0 1px #dcdcdc;"></div>
<div style="position:absolute;left:344px;top:160.4px;width:99.00px;height:18.60px;background:#fff;border:1px solid #6e6e6e;box-shadow:inset 0 0 0 1px #dcdcdc;"></div>
<div style="position:absolute;left:446.6px;top:160.4px;width:130.40px;height:18.60px;background:#fff;border:1px solid #6e6e6e;box-shadow:inset 0 0 0 1px #dcdcdc;"></div>
<div style="position:absolute;left:580.6px;top:160.4px;width:151.40px;height:18.60px;background:#fff;border:1px solid #6e6e6e;box-shadow:inset 0 0 0 1px #dcdcdc;"></div>
<div style="position:absolute;left:240px;top:207.8px;width:101.80px;height:13.40px;background:#9accfd;border:1px dashed #4b6f98;"></div>
<svg class="abs" style="left:192.6px;top:211px" width="5" height="7" viewBox="0 0 5 7"><path d="M.3 .4L4.8 3.5L.3 6.6L1.7 3.5z" fill="#2a2a2a" stroke="#2a2a2a" stroke-width=".5" stroke-linejoin="round"/></svg>
<div class="t" style="left:242.00px;top:183.10px;font-size:8.5px;letter-spacing:0.025px;color:#111;">23/08/2022 8:42:49 AM</div>
<div class="t" style="left:580.60px;top:183.27px;font-size:8.3px;letter-spacing:-0.457px;color:#111;">JENNEN HALLWAY</div>
<div class="t" style="left:242.00px;top:197.00px;font-size:8.5px;letter-spacing:0.025px;color:#111;">23/08/2022 8:42:27 AM</div>
<div class="t" style="left:344.60px;top:197.00px;font-size:8.5px;letter-spacing:0.025px;color:#111;">23/08/2022 8:42:40 AM</div>
<div class="t" style="left:580.60px;top:197.17px;font-size:8.3px;letter-spacing:-0.289px;color:#111;">MELANI ACOSTA</div>
<div class="t" style="left:242.00px;top:210.90px;font-size:8.5px;letter-spacing:-0.038px;color:#111;">22/08/2022 6:26:52 PM</div>
<div class="t" style="left:344.60px;top:210.90px;font-size:8.5px;letter-spacing:0.025px;color:#111;">23/08/2022 8:42:34 AM</div>
<div class="t" style="left:465.50px;top:210.90px;font-size:8.5px;letter-spacing:-0.076px;color:#111;">0 Days, 14 Hours, 15 Minutes</div>
<div class="t" style="left:580.60px;top:211.07px;font-size:8.3px;letter-spacing:-0.232px;color:#111;">NORLIZA RAMLI</div>
<div class="t" style="left:242.00px;top:224.80px;font-size:8.5px;letter-spacing:0.048px;color:#111;">19/08/2022 11:26:58 AM</div>
<div class="t" style="left:344.60px;top:224.80px;font-size:8.5px;letter-spacing:-0.017px;color:#111;">22/08/2022 4:11:27 PM</div>
<div class="t" style="left:470.80px;top:224.80px;font-size:8.5px;letter-spacing:-0.101px;color:#111;">3 Days, 4 Hours, 44 Minutes</div>
<div class="t" style="left:580.60px;top:224.97px;font-size:8.3px;letter-spacing:-0.457px;color:#111;">JENNEN HALLWAY</div>
<div class="t" style="left:242.00px;top:238.70px;font-size:8.5px;letter-spacing:-0.007px;color:#111;">17/11/2021 6:40:47 PM</div>
<div class="t" style="left:344.60px;top:238.70px;font-size:8.5px;letter-spacing:-0.033px;color:#111;">06/04/2022 12:39:22 PM</div>
<div class="t" style="left:457.40px;top:238.70px;font-size:8.5px;letter-spacing:-0.118px;color:#111;">139 Days, 17 Hours, 58 Minutes</div>
<div class="t" style="left:580.60px;top:238.87px;font-size:8.3px;letter-spacing:-0.232px;color:#111;">NORLIZA RAMLI</div>
<div style="position:absolute;left:735.4px;top:145px;width:13.60px;height:376.00px;background:#f0f0f0;"></div>
<div style="position:absolute;left:736.6px;top:237px;width:11.00px;height:192.60px;background:#c9c9c9;"></div>
<svg class="abs" style="left:738px;top:150px" width="9" height="7" viewBox="0 0 9 7"><path d="M1.6 4.8L4.5 2L7.4 4.8" fill="none" stroke="#3c3c3c" stroke-width="1.5"/></svg>
<svg class="abs" style="left:737.6px;top:511px" width="9" height="7" viewBox="0 0 9 7"><path d="M1.6 2.2L4.5 5L7.4 2.2" fill="none" stroke="#3c3c3c" stroke-width="1.5"/></svg>
<div style="position:absolute;left:190.4px;top:521px;width:558.60px;height:13.20px;background:#f0f0f0;"></div>
<div style="position:absolute;left:204px;top:522.2px;width:13.20px;height:10.60px;background:#c9c9c9;"></div>
<svg class="abs" style="left:194px;top:522.6px" width="7" height="9" viewBox="0 0 7 9"><path d="M4.8 1.6L2 4.5L4.8 7.4" fill="none" stroke="#3c3c3c" stroke-width="1.5"/></svg>
<svg class="abs" style="left:725.6px;top:522.6px" width="7" height="9" viewBox="0 0 7 9"><path d="M2.2 1.6L5 4.5L2.2 7.4" fill="none" stroke="#3c3c3c" stroke-width="1.5"/></svg>
<div style="position:absolute;left:755px;top:94.6px;width:213.00px;height:443.40px;background:#f0f0f0;border:1px solid #9d9d9d;border-radius:3px;box-shadow:inset -1px -1px 0 #c4c4c4, inset 1px 0 0 #d8d8d8;"></div>
<svg class="abs" style="left:766px;top:129px" width="26" height="27" viewBox="766 129 26 27"><circle cx="779" cy="142.4" r="10.9" fill="#fff" stroke="#3db872" stroke-width="1.1"/><path d="M772.8 143.2 l4.6 4.6 l8.6 -9.4" fill="none" stroke="#3db872" stroke-width="1.2"/></svg>
<div style="position:absolute;left:768px;top:163.2px;width:23.20px;height:16.80px;background:#fff;border:1px solid #2c2c2c;"></div>
<svg class="abs" style="left:768px;top:163px" width="24" height="17" viewBox="768 163 24 17" fill="none"><circle cx="775.6" cy="168.6" r="2.8" stroke="#4a9fe0" stroke-width="1.1"/><path d="M771 178 c.4 -5 2.6 -6 4.6 -6 c2 0 4.2 1 4.6 6" stroke="#4a9fe0" stroke-width="1.1"/><path d="M782.6 167.4h6M782.6 169.8h6M782.6 172.2h6M782.6 174.6h6" stroke="#b0b0b0" stroke-width="1.1"/></svg>
<svg class="abs" style="left:874px;top:113px" width="86" height="115.6" viewBox="0 0 86 115.6" preserveAspectRatio="none"><defs><filter id="bl" x="-10%" y="-10%" width="120%" height="120%"><feGaussianBlur stdDeviation="0.55"/></filter><filter id="bl2" x="-20%" y="-20%" width="140%" height="140%"><feGaussianBlur stdDeviation="1.8"/></filter><filter id="bl3" x="-20%" y="-20%" width="140%" height="140%"><feGaussianBlur stdDeviation="0.35"/></filter><radialGradient id="sk" gradientUnits="userSpaceOnUse" cx="46" cy="50" r="48"><stop offset="0" stop-color="#efc8b1"/><stop offset="0.4" stop-color="#e4b59c"/><stop offset="0.75" stop-color="#d39f86"/><stop offset="1" stop-color="#bf8b72"/></radialGradient><linearGradient id="hr" x1="0" y1="0" x2="1" y2="0"><stop offset="0" stop-color="#3a2a24"/><stop offset="0.35" stop-color="#2c201c"/><stop offset="1" stop-color="#241a17"/></linearGradient><clipPath id="pc"><rect x="0" y="0" width="86" height="115.6"/></clipPath><clipPath id="skc"><path d="M56.4 18.4 C53 18.2,49.5 18.6,46.2 19.4 C42 20.4,38.5 21.8,35.5 23.7 C33 25.4,30.8 27.6,29.1 30.2 C27.4 32.8,26.2 35.6,25.3 38.7 L23.2 45.2 L22.1 53.7 L19.6 61.2 L21 70.9 L24.8 81.6 L30.2 91.2 L35.5 98.7 L36.6 117 L70 117 L67.7 106.2 L67.7 94.4 L72 84.8 L75.2 70.9 L76.9 66 L74.6 58 L73.6 49.4 L72 40.9 C71 37,69.6 33.4,67.7 30.2 C66 27.4,64.3 24.8,62.3 22.7 C60.4 20.8,58.6 19.4,56.4 18.4z"/></clipPath></defs><rect width="86" height="115.6" fill="#e0f6d9"/><g clip-path="url(#pc)"><g filter="url(#bl)"><path d="M37.7 -1 C33 2,30 5,27 7.6 C23.5 11,21 13.5,19.4 16.2 C17 20,16 23,15.1 25.9 C13.8 30,13 33,12.5 36.6 C11.6 41,11.2 44,10.9 47.3 L10.3 58 L8.7 74 L6.6 90 L4.4 106 L3.6 117 L90 117 L90 36 L85.4 33.4 C85 30,84.5 28,83.7 25.9 C82.5 22,81 19,79.5 16.2 C77.5 12.5,75.5 10,73 7.6 C70 4.5,67 2,63.4 -1z" fill="url(#hr)"/></g><g filter="url(#bl)" fill="none" stroke-linecap="round"><path d="M52 4 C40 8,28 18,22 34" stroke="#56433b" stroke-width="2.6" opacity=".45"/><path d="M50 9 C40 13,31 21,26 32" stroke="#4a3831" stroke-width="2" opacity=".45"/><path d="M16 40 C13 60,12 80,8 104" stroke="#44332c" stroke-width="2.4" opacity=".4"/><path d="M60 6 C70 12,78 22,82 36" stroke="#3a2b26" stroke-width="2.4" opacity=".4"/><path d="M56.4 2 L56.4 18" stroke="#6a564c" stroke-width=".8" opacity=".4"/></g><g filter="url(#bl)"><path d="M56.4 18.4 C53 18.2,49.5 18.6,46.2 19.4 C42 20.4,38.5 21.8,35.5 23.7 C33 25.4,30.8 27.6,29.1 30.2 C27.4 32.8,26.2 35.6,25.3 38.7 L23.2 45.2 L22.1 53.7 L19.6 61.2 L21 70.9 L24.8 81.6 L30.2 91.2 L35.5 98.7 L36.6 117 L70 117 L67.7 106.2 L67.7 94.4 L72 84.8 L75.2 70.9 L76.9 66 L74.6 58 L73.6 49.4 L72 40.9 C71 37,69.6 33.4,67.7 30.2 C66 27.4,64.3 24.8,62.3 22.7 C60.4 20.8,58.6 19.4,56.4 18.4z" fill="url(#sk)"/></g><g clip-path="url(#skc)"><g filter="url(#bl2)"><path d="M26 86 L34 97 C40 102.5,50 102.5,57 98.5 L67 89 L72 96 L72 120 L33 120z" fill="#b98870" opacity=".9"/><path d="M17 56 L20 74 L25 87 L33 97 L37 100 L40 92 L30 80 L25 60z" fill="#a87862" opacity=".55"/><path d="M78 48 L76 70 L71 86 L66 95 L62 90 L69 74 L72 52z" fill="#a87862" opacity=".5"/><path d="M24 30 C36 16,54 14,68 26 L66 30 C54 21,38 22,28 36z" fill="#8a624f" opacity=".5"/><ellipse cx="44" cy="40" rx="12" ry="8" fill="#f4d3bf" opacity=".5"/><ellipse cx="58" cy="70" rx="7" ry="6" fill="#f3cbb6" opacity=".5"/></g></g><g filter="url(#bl)"><path d="M54.5 117 C58 113,63 109.5,68.7 107 L72 117z" fill="#1d1816"/></g><g filter="url(#bl3)"><path d="M22.7 45 C25 43.4,28 43.6,30.5 44.6 C32.5 45.4,34.2 46.6,35.6 47.8 C33 47,30.5 46.4,28 46.2 C26 46,24.2 45.8,22.7 45z" fill="#4a332b"/><path d="M47.6 47.6 C50 45.6,53 44.2,56 43.8 C59.5 43.4,63 44,66 45.4 C62.5 45.4,59.5 45.6,56.5 46.2 C53.4 46.8,50.4 47.4,47.6 47.6z" fill="#4a332b"/><path d="M22.6 53.6 C25 51,29.5 50.4,34.6 53.8 C31 55.6,26 55.8,22.6 53.6z" fill="#cdb4aa"/><path d="M49.8 54 C53 50.8,58.5 50.6,63.6 53 C60 55.8,53.5 56,49.8 54z" fill="#cdb4aa"/><circle cx="28.6" cy="53.2" r="2.3" fill="#3a2620"/><circle cx="56.6" cy="53.4" r="2.4" fill="#3a2620"/><path d="M22 53.4 C25 50.4,30 49.8,35 53.6" stroke="#2a1b17" stroke-width="1.1" fill="none"/><path d="M49.4 54 C53 50,59 50,64.4 52.6" stroke="#2a1b17" stroke-width="1.1" fill="none"/><path d="M22.4 54 C26 56.2,31 56,34.6 54" stroke="#8a5e50" stroke-width=".6" fill="none"/><path d="M50 54.6 C54 56.6,60 56.2,63.4 53.6" stroke="#8a5e50" stroke-width=".6" fill="none"/></g><g filter="url(#bl)"><path d="M40.2 56 C39.6 61,37.8 65,36.6 68.6" stroke="#c9957c" stroke-width="1.3" fill="none" opacity=".6"/><path d="M36.2 70 C37.6 72.4,40 73,42 73.2 C44.4 73,46.8 72.4,48.2 70" stroke="#a9705c" stroke-width="1.2" fill="none"/><ellipse cx="42.4" cy="66" rx="2.6" ry="4.6" fill="#f6d8c6" opacity=".4"/><path d="M33.6 82.6 C36 81,38.6 80.2,40.6 80.6 L42.4 81.4 L44.4 80.6 C47 80.2,49.6 81.2,51.6 82.8 C49 85.6,46 88.6,42.2 88.8 C38.6 88.6,35.6 85.8,33.6 82.6z" fill="#a45263"/><path d="M33.6 82.6 C37 83.4,40 83.8,42.4 83.6 C45 83.8,48.6 83.6,51.6 82.8" stroke="#8a3f50" stroke-width=".9" fill="none"/><circle cx="75.8" cy="69.4" r="0.9" fill="#f4f4f4"/></g></g><rect x=".5" y=".5" width="85" height="114.6" fill="none" stroke="#8c8c8c" stroke-width="1"/></svg>
<div class="t" style="left:762.30px;top:203.21px;font-size:9.2px;letter-spacing:0.023px;color:#0a0a0a;font-weight:bold;transform:scaleY(1.07);transform-origin:0 7.79px;">Document Type</div>
<div class="t" style="left:762.60px;top:217.31px;font-size:7.9px;letter-spacing:-0.424px;color:#141438;transform:scaleY(1.22);transform-origin:0 6.69px;">MYKAD</div>
<div class="t" style="left:763.40px;top:232.41px;font-size:9.2px;letter-spacing:0.059px;color:#0a0a0a;font-weight:bold;transform:scaleY(1.07);transform-origin:0 7.79px;">Identification</div>
<div class="t" style="left:763.40px;top:245.97px;font-size:8.3px;letter-spacing:0.056px;color:#141438;">010205105263</div>
<div class="t" style="left:763.00px;top:263.21px;font-size:9.2px;letter-spacing:-0.119px;color:#0a0a0a;font-weight:bold;transform:scaleY(1.07);transform-origin:0 7.79px;">Name</div>
<div class="t" style="left:763.40px;top:278.61px;font-size:7.9px;letter-spacing:0.013px;color:#141438;transform:scaleY(1.22);transform-origin:0 6.69px;">NORLIZA RAMLI</div>
<div class="t" style="left:763.00px;top:293.11px;font-size:9.2px;letter-spacing:-0.061px;color:#0a0a0a;font-weight:bold;transform:scaleY(1.07);transform-origin:0 7.79px;">Gender</div>
<div class="t" style="left:871.40px;top:293.11px;font-size:9.2px;letter-spacing:-0.156px;color:#0a0a0a;font-weight:bold;transform:scaleY(1.07);transform-origin:0 7.79px;">Ethnicity</div>
<div class="t" style="left:762.60px;top:307.01px;font-size:7.9px;letter-spacing:-0.441px;color:#141438;transform:scaleY(1.22);transform-origin:0 6.69px;">FEMALE</div>
<div class="t" style="left:762.60px;top:324.11px;font-size:9.2px;letter-spacing:-0.006px;color:#0a0a0a;font-weight:bold;transform:scaleY(1.07);transform-origin:0 7.79px;">Visitor Category</div>
<div class="t" style="left:871.40px;top:324.11px;font-size:9.2px;letter-spacing:-0.015px;color:#0a0a0a;font-weight:bold;transform:scaleY(1.07);transform-origin:0 7.79px;">Telephone</div>
<div style="position:absolute;left:757px;top:374.4px;width:201.00px;height:136.20px;background:#fff;border:1px solid #e4e4e4;"></div>
<div style="position:absolute;left:757px;top:358.6px;width:42.40px;height:17.00px;background:#fff;border:1px solid #d6d6d6;border-bottom:none;"></div>
<div class="t" style="left:762.90px;top:362.80px;font-size:8.5px;letter-spacing:-0.197px;color:#111;">Address</div>
<div style="position:absolute;left:799.4px;top:360.6px;width:32.00px;height:13.80px;background:#f0f0f0;border:1px solid #d4d4d4;border-left:none;border-bottom:none;"></div>
<div class="t" style="left:802.00px;top:364.80px;font-size:8.5px;letter-spacing:-0.230px;color:#111;">Details</div>
<div style="position:absolute;left:831.4px;top:360.6px;width:40.90px;height:13.80px;background:#f0f0f0;border:1px solid #d4d4d4;border-left:none;border-bottom:none;"></div>
<div class="t" style="left:835.70px;top:364.80px;font-size:8.5px;letter-spacing:-0.334px;color:#111;">Remarks</div>
<div style="position:absolute;left:872.3px;top:360.6px;width:31.10px;height:13.80px;background:#f0f0f0;border:1px solid #d4d4d4;border-left:none;border-bottom:none;"></div>
<div class="t" style="left:876.60px;top:364.80px;font-size:8.5px;letter-spacing:-0.399px;color:#111;">Pass</div>
<div class="t" style="left:762.30px;top:382.41px;font-size:9.2px;letter-spacing:-0.185px;color:#0a0a0a;font-weight:bold;transform:scaleY(1.07);transform-origin:0 7.79px;">Address</div>
<div class="t" style="left:762.00px;top:394.04px;font-size:7.75px;letter-spacing:-0.024px;color:#141438;transform:scaleY(1.22);transform-origin:0 6.56px;">NO 5 TAMAN MELAKA BARU</div>
<div class="t" style="left:762.00px;top:411.40px;font-size:7.8px;letter-spacing:-0.221px;color:#141438;transform:scaleY(1.22);transform-origin:0 6.60px;">BATU MELAKA  1</div>
<div class="t" style="left:762.00px;top:444.50px;font-size:7.8px;letter-spacing:-0.329px;color:#141438;transform:scaleY(1.22);transform-origin:0 6.60px;">MELAKA</div>
<div class="t" style="left:762.60px;top:461.07px;font-size:8.3px;letter-spacing:-0.179px;color:#141438;">751200</div>
<div class="t" style="left:800.60px;top:461.60px;font-size:7.8px;letter-spacing:-0.241px;color:#141438;transform:scaleY(1.22);transform-origin:0 6.60px;">MELAKAA</div>
<div class="t" style="left:762.00px;top:480.41px;font-size:9.2px;letter-spacing:-0.169px;color:#0a0a0a;font-weight:bold;transform:scaleY(1.07);transform-origin:0 7.79px;">Company</div>
<div class="t" style="left:762.00px;top:493.00px;font-size:7.8px;letter-spacing:-0.531px;color:#141438;transform:scaleY(1.22);transform-origin:0 6.60px;">BMW</div>
<div style="position:absolute;left:759.4px;top:516.6px;width:30.60px;height:17.70px;background:#e2e2e2;border:1px solid #c2c2c2;"></div>
<svg class="abs" style="left:770.1px;top:521px" width="9.2" height="9.2" viewBox="0 0 8 8" fill="#2f6fc0"><path d="M0 0h1.6v8H0z M8 0L2.2 4L8 8z"/></svg>
<div style="position:absolute;left:792px;top:516.6px;width:30.90px;height:17.70px;background:#e2e2e2;border:1px solid #c2c2c2;"></div>
<svg class="abs" style="left:802.9px;top:521px" width="9.2" height="9.2" viewBox="0 0 8 8" fill="#2f6fc0"><path d="M6.4 0L.6 4L6.4 8z"/></svg>
<div style="position:absolute;left:824.9px;top:516.6px;width:30.00px;height:17.70px;background:#e2e2e2;border:1px solid #c2c2c2;"></div>
<svg class="abs" style="left:835.3px;top:521px" width="9.2" height="9.2" viewBox="0 0 8 8" fill="#2f6fc0"><path d="M.6 0L6.4 4L.6 8z"/></svg>
<div style="position:absolute;left:857px;top:516.6px;width:30.70px;height:17.70px;background:#e2e2e2;border:1px solid #c2c2c2;"></div>
<svg class="abs" style="left:867.8px;top:521px" width="9.2" height="9.2" viewBox="0 0 8 8" fill="#2f6fc0"><path d="M6.4 0H8v8H6.4z M0 0L5.8 4L0 8z"/></svg>
<div style="position:absolute;left:895px;top:516.6px;width:64.40px;height:17.70px;background:#e2e2e2;border:1px solid #c2c2c2;"></div>
<div class="t" style="left:904.90px;top:521.57px;font-size:8.3px;letter-spacing:-0.129px;color:#111;">View Details</div>
<div style="position:absolute;left:6px;top:538.8px;width:963.00px;height:15.00px;background:#f3f3f3;border-top:1px solid #dddddd;"></div>
<div style="position:absolute;left:145.4px;top:541px;width:1.00px;height:11.60px;background:#d9d9d9;"></div>
<div style="position:absolute;left:338.6px;top:541px;width:1.00px;height:11.60px;background:#d9d9d9;"></div>
<div style="position:absolute;left:417px;top:541px;width:1.00px;height:11.60px;background:#d9d9d9;"></div>
<div class="t" style="left:418.80px;top:543.66px;font-size:8.2px;letter-spacing:0.353px;color:#111;">Site : CONDO-DEMO - GUARD</div>
<div style="position:absolute;left:965px;top:550px;width:1.40px;height:1.40px;background:#a8a8a8;"></div>
<div style="position:absolute;left:962px;top:550px;width:1.40px;height:1.40px;background:#a8a8a8;"></div>
<div style="position:absolute;left:959px;top:550px;width:1.40px;height:1.40px;background:#a8a8a8;"></div>
<div style="position:absolute;left:965px;top:547px;width:1.40px;height:1.40px;background:#a8a8a8;"></div>
<div style="position:absolute;left:962px;top:547px;width:1.40px;height:1.40px;background:#a8a8a8;"></div>
<div style="position:absolute;left:965px;top:544px;width:1.40px;height:1.40px;background:#a8a8a8;"></div>
</body>
</html>
